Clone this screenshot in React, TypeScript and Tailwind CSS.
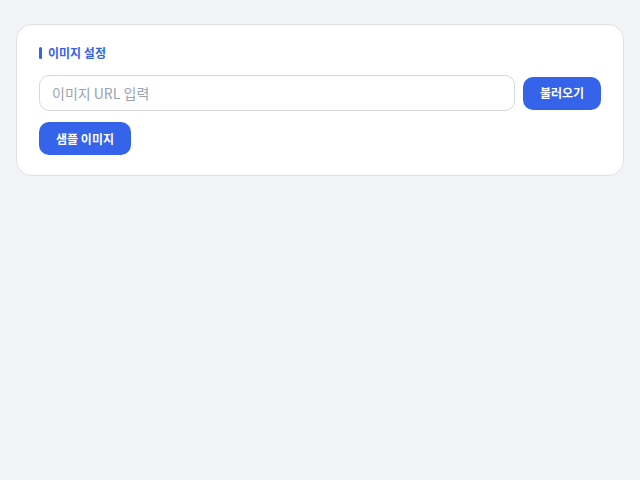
import React from "react";

const App: React.FC = () => {
  return (
    <div
      className="min-h-screen bg-[#f3f4f6] px-4 pt-6"
      style={{ fontFamily: '"Noto Sans CJK KR", "Noto Sans", sans-serif' }}
    >
      {/* Image settings card */}
      <section className="rounded-[16px] border border-[#dde1e7] bg-white px-[22px] pt-[21px] pb-[20px]">
        <h2 className="flex items-center gap-[6px] text-[12px] font-bold leading-[14px] text-[#3563e9]">
          <span className="inline-block h-[12px] w-[3px] rounded-full bg-[#3563e9]" />
          이미지 설정
        </h2>

        <div className="mt-[15px] flex items-center gap-2">
          <input
            type="text"
            placeholder="이미지 URL 입력"
            className="h-[36px] flex-1 rounded-[10px] border border-[#d5dae1] bg-white px-3 text-[14px] text-gray-700 placeholder:text-[#9aa3b2] outline-none"
          />
          <button className="h-[33px] w-[78px] rounded-[10px] bg-[#3563e9] text-[12px] font-bold text-white">
            불러오기
          </button>
        </div>

        <button className="mt-[11px] h-[33px] w-[92px] rounded-[10px] bg-[#3563e9] text-[12px] font-bold text-white">
          샘플 이미지
        </button>
      </section>
    </div>
  );
};

export default App;
